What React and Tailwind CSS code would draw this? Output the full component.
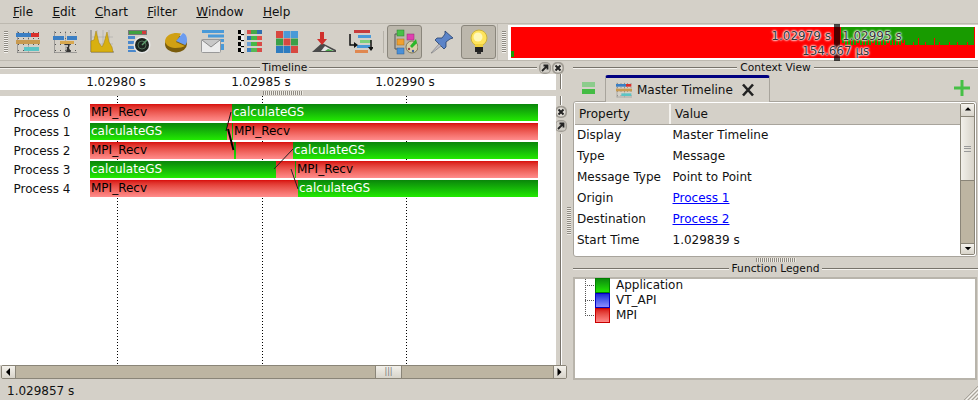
import React from 'react';

const GridDots = () => (
  <g fill="#555">
    {[2, 7, 12, 17, 22].map((x) =>
      [2, 8, 14, 20].map((y) => <rect key={`${x}-${y}`} x={x} y={y} width="1" height="1" />)
    )}
    <rect x="1" y="1" width="1" height="22" fill="#777" opacity="0.6" />
    <rect x="12" y="1" width="1" height="22" fill="#777" opacity="0.4" />
    <rect x="1" y="22" width="23" height="1" fill="#777" opacity="0.6" />
  </g>
);

const MasterIcon = ({ size = 24 }) => (
  <svg width={size} height={size} viewBox="0 0 24 24">
    <GridDots />
    <rect x="0" y="3" width="16" height="4" fill="#3b7fc4" />
    <rect x="15" y="3" width="8" height="4" fill="#d8302c" />
    <rect x="0" y="10" width="24" height="4" fill="#c89a50" />
    <rect x="8" y="17" width="15" height="4" fill="#5cc4c4" />
  </svg>
);

const CounterIcon = () => (
  <svg width="24" height="24" viewBox="0 0 24 24">
    <GridDots />
    <rect x="0" y="6" width="11" height="4" fill="#3b7fc4" />
    <rect x="14" y="6" width="10" height="4" fill="#3b7fc4" />
    <rect x="7" y="11" width="14" height="3" fill="#d8a850" />
    <path d="M11 14h6l-1 4 2 4h-5l1-4z" fill="#333" />
    <path d="M12 15h3v2h-3z" fill="#bbb" />
  </svg>
);

const ChartIcon = () => (
  <svg width="24" height="24" viewBox="0 0 24 24">
    <path d="M1 0v22h23" fill="none" stroke="#777" />
    <path d="M7 0v22M13 0v22M19 0v22M1 7h22M1 14h22" stroke="#aaa" strokeWidth="0.6" />
    <path d="M1 22V11l3-1 2-9 3 12 3 4 2-4 3-11 2 10 3 5 1 5z" fill="#d8b010" stroke="#a07c08" strokeWidth="0.5" />
  </svg>
);

const RadarIcon = () => (
  <svg width="24" height="24" viewBox="0 0 24 24">
    <rect x="1" y="0" width="19" height="5" fill="#777" />
    <rect x="2" y="1" width="17" height="3" fill="#3fa03f" />
    <rect x="15" y="1" width="4" height="3" fill="#d23c3c" />
    <rect x="1" y="6" width="7" height="3" fill="#4a88cc" />
    <rect x="1" y="11" width="6" height="3" fill="#4a88cc" />
    <rect x="1" y="16" width="6" height="3" fill="#4a88cc" />
    <rect x="1" y="20" width="8" height="2" fill="#4a88cc" />
    <circle cx="15" cy="15" r="8.5" fill="#e8e8e8" />
    <circle cx="15" cy="15" r="7" fill="#1c241e" />
    <circle cx="15" cy="15" r="4" fill="none" stroke="#4e6e56" />
    <path d="M15 15l5-5" stroke="#5fa06f" strokeWidth="1.5" />
  </svg>
);

const PieIcon = () => (
  <svg width="24" height="24" viewBox="0 0 24 24">
    <ellipse cx="12" cy="14" rx="11" ry="8.5" fill="#7a5c0c" />
    <path d="M12 12L17 3.5C12 2 2 3 1 11c0 3 4 7 10 7 5 0 8-1 10-2z" fill="#d0a014" />
    <path d="M12 11l7-8c3 1 4 4 4 7 0 2-1 5-2 5z" fill="#6c9cf0" />
  </svg>
);

const MessageIcon = () => (
  <svg width="24" height="24" viewBox="0 0 24 24">
    <rect x="1" y="0" width="22" height="3" fill="#4a9ad8" />
    <rect x="7" y="4.5" width="16" height="3" fill="#4a9ad8" />
    <rect x="15" y="9" width="8" height="3" fill="#4a9ad8" />
    <rect x="18" y="14" width="5" height="6" fill="#4a9ad8" />
    <rect x="0.5" y="9.5" width="19" height="13" rx="1" fill="#ececec" stroke="#999" />
    <path d="M1 10l9 7 9-7" fill="#c8c8c8" stroke="#8a8a8a" />
  </svg>
);

const ProcessIcon = () => {
  const bars = [
    ['#d8504c', '#46a846', '#2f6fb0'],
    ['#2f6fb0', '#46b846', '#e05048'],
    ['#6aa0d8', '#46b846', '#d84c48'],
    ['#3b7fc4', '#55b855', '#d84c48'],
  ];
  return (
    <svg width="24" height="24" viewBox="0 0 24 24">
      {bars.map((r, i) => (
        <g key={i} transform={`translate(0 ${i * 6})`}>
          <rect x="0" y="0" width="3" height="4" fill="#000" />
          <rect x="3" y="0" width="3" height="4" fill="#eee" />
          <rect x="3" y="4" width="3" height="1" fill="#000" />
          <rect x="9" y="0" width="5" height="4" fill={r[0]} />
          <rect x="13" y="0" width="6" height="4" fill={r[1]} />
          <rect x="19" y="0" width="5" height="4" fill={r[2]} />
        </g>
      ))}
    </svg>
  );
};

const MatrixIcon = () => {
  const cells = ['#d84840', '#4a9ad8', '#4a9ad8', '#3aa048', '#d84840', '#3aa048', '#2e7cc0', '#2e7cc0', '#d84840'];
  return (
    <svg width="24" height="24" viewBox="0 0 24 24">
      {cells.map((c, i) => (
        <rect key={i} x={1 + (i % 3) * 7.5} y={1 + Math.floor(i / 3) * 7.5} width="7" height="7" fill={c} />
      ))}
    </svg>
  );
};

const DiffIcon = () => (
  <svg width="24" height="24" viewBox="0 0 24 24">
    <path d="M0 22L10 13l14 7v2z" fill="#4a4a4a" />
    <path d="M13 16l9 5H9z" fill="#e4e4e4" />
    <path d="M16 19l6 2h-9z" fill="#4aa84a" />
    <path d="M8 2h4v7h3l-5 6-5-6h3z" fill="#d0302c" />
  </svg>
);

const CallIcon = () => (
  <svg width="24" height="24" viewBox="0 0 24 24">
    <rect x="5" y="0" width="16" height="3" fill="#c83c3c" />
    <rect x="9" y="5" width="13" height="3" fill="#4a9ad8" />
    <rect x="11" y="10" width="11" height="3" fill="#7cd07c" />
    <rect x="8" y="15" width="13" height="3" fill="#4a9ad8" />
    <rect x="6" y="20" width="13" height="3" fill="#e08850" />
    <path d="M1 4v11h6M22 10v9" fill="none" stroke="#111" strokeWidth="1.5" />
    <path d="M5 12l4 3-4 3zM19 17h6l-3 4z" fill="#111" />
  </svg>
);

const ModulesIcon = () => (
  <svg width="26" height="26" viewBox="0 0 26 26">
    <path d="M5 5H3v15h3" fill="none" stroke="#555" />
    <rect x="5" y="1" width="7" height="6" fill="#48c048" stroke="#2c7c2c" strokeWidth="0.5" />
    <rect x="5" y="10" width="7" height="6" fill="#f0a030" stroke="#a06c18" strokeWidth="0.5" />
    <rect x="5" y="19" width="7" height="6" fill="#4a90d8" stroke="#2c5c90" strokeWidth="0.5" />
    <rect x="15" y="5" width="7" height="6" fill="#e040b0" stroke="#902c70" strokeWidth="0.5" />
    <ellipse cx="20" cy="18" rx="6" ry="6" fill="#d8cfa8" stroke="#807858" />
    <path d="M24 10l-6 7 2 2 5-5z" fill="#28b828" />
    <circle cx="17" cy="20" r="1.2" fill="#a04040" />
    <circle cx="21" cy="22" r="1.2" fill="#4060a0" />
  </svg>
);

const PinIcon = () => (
  <svg width="24" height="24" viewBox="0 0 24 24">
    <path d="M15 1l8 7-3 1-4 3 0 5-2 2-9-9 2-2 5 0 3-4z" fill="#5c84c8" stroke="#24406c" strokeWidth="0.8" />
    <path d="M9 14L1 23l1 0 9-7z" fill="#c0c0c8" stroke="#666" strokeWidth="0.5" />
  </svg>
);

const BulbIcon = () => (
  <svg width="24" height="26" viewBox="0 0 24 26">
    <circle cx="12" cy="9" r="8" fill="#ffe45c" stroke="#c8b040" />
    <circle cx="11" cy="8" r="4.5" fill="#fff8b8" />
    <path d="M8 15h8v3H8z" fill="#f0d040" />
    <rect x="8" y="18" width="8" height="5" fill="#222" />
    <rect x="10" y="23" width="4" height="2" fill="#333" />
  </svg>
);

const StackIcon = () => (
  <svg width="15" height="13" viewBox="0 0 15 13">
    <rect x="1" y="0" width="13" height="5" fill="#8ccc8c" />
    <rect x="1" y="7" width="13" height="5" fill="#44bc44" />
  </svg>
);

const Grip = ({ className }) => (
  <div
    className={`bg-[repeating-linear-gradient(to_right,#8f8b83_0,#8f8b83_1px,#eeebe4_1px,#eeebe4_2px)] ${className}`}
  />
);

const GripV = () => (
  <div className="w-[4px] h-[28px] bg-[repeating-linear-gradient(to_bottom,#8f8b83_0,#8f8b83_1px,#eeebe4_1px,#eeebe4_2px)]" />
);

const Line = ({ className = 'flex-1' }) => (
  <div className={`h-[2px] border-t border-[#77736b] border-b-white bg-[#f4f2ee] ${className}`} />
);

const CloseBtn = () => (
  <div className="w-[12px] h-[12px] rounded-[5px] bg-[#a09c94] flex items-center justify-center">
    <svg width="10" height="10" viewBox="0 0 10 10">
      <circle cx="5" cy="5" r="4.5" fill="#e0ddd6" />
      <path d="M2.5 2.5l5 5M7.5 2.5l-5 5" stroke="#222" strokeWidth="2" />
    </svg>
  </div>
);

const FloatBtn = () => (
  <div className="w-[12px] h-[12px] rounded-[5px] bg-[#a09c94] flex items-center justify-center">
    <svg width="10" height="10" viewBox="0 0 10 10">
      <rect x="0.5" y="0.5" width="9" height="9" rx="2" fill="#d0cdc6" />
      <path d="M2 8l5-5M3.5 2.5h4v4" fill="none" stroke="#222" strokeWidth="1.8" />
    </svg>
  </div>
);

const Arrow = ({ dir }) => {
  const d = {
    up: 'M1 5.5h8L5 1.5z',
    down: 'M1 2.5h8L5 6.5z',
    left: 'M6 1v8L2 5z',
    right: 'M2.5 1v8L6.5 5z',
  }[dir];
  return (
    <svg width="10" height="10" viewBox="0 0 10 10" className={dir === 'up' || dir === 'down' ? 'h-[8px]' : ''}>
      <path d={d} fill="#000" />
    </svg>
  );
};

const ScrollBtn = ({ dir, className = '' }) => (
  <div className={`flex items-center justify-center bg-linear-to-b from-[#f4f2ec] to-[#d8d4ca] ${className}`}>
    <Arrow dir={dir} />
  </div>
);

const rows = [
  { name: 'Process 0', segs: [['r', 142, 'MPI_Recv'], ['g', 306, 'calculateGS']] },
  { name: 'Process 1', segs: [['g', 137, 'calculateGS'], ['r', 5], ['g', 1], ['r', 305, 'MPI_Recv']] },
  { name: 'Process 2', segs: [['r', 144, 'MPI_Recv'], ['g', 2], ['r', 57], ['g', 245, 'calculateGS']] },
  { name: 'Process 3', segs: [['g', 186, 'calculateGS'], ['r', 19], ['g', 1], ['r', 242, 'MPI_Recv']] },
  { name: 'Process 4', segs: [['r', 208, 'MPI_Recv'], ['g', 240, 'calculateGS']] },
];

const ticks = [117, 262, 406];

const details = [
  ['Display', 'Master Timeline'],
  ['Type', 'Message'],
  ['Message Type', 'Point to Point'],
  ['Origin', 'Process 1', true],
  ['Destination', 'Process 2', true],
  ['Start Time', '1.029839 s'],
];

const legend = [
  ['Application', 'border-[#008000] from-[#0c8c0c] to-[#22e600]'],
  ['VT_API', 'border-[#0000c0] from-[#2020d8] to-[#8c8cff]'],
  ['MPI', 'border-[#c80000] from-[#d81010] to-[#ff8888]'],
];

const halo = '[text-shadow:0_0_1px_#fff,0_0_2px_#fff,0_0_2px_#fff,0_0_3px_#fff] text-[#333]';

// comb of the red/green activity in the overview
const comb = Array.from({ length: 44 }, (_, i) => i * 3);

const App = () => {
  return (
    <div className="w-[978px] h-[400px] overflow-hidden flex flex-col bg-[#d4d0c8] text-[12px] leading-[14px] text-[#111] font-['DejaVu_Sans',sans-serif]">
      {/* Menu */}
      <div className="h-[23px] flex items-center gap-[19.3px] pl-[13px]">
        {['File', 'Edit', 'Chart', 'Filter', 'Window', 'Help'].map((m) => (
          <span key={m}>
            <span className="underline">{m[0]}</span>
            {m.slice(1)}
          </span>
        ))}
      </div>

      {/* Toolbar */}
      <div className="h-[38px] border-y border-y-[#bdb9b0] flex items-center pl-[4px]">
        <div className="w-[4px] h-[22px] mr-[1px] bg-[repeating-linear-gradient(to_bottom,#8f8b83_0,#8f8b83_1px,#f4f2ee_1px,#f4f2ee_2px)]" />
        {[MasterIcon, CounterIcon, ChartIcon, RadarIcon, PieIcon, MessageIcon, ProcessIcon, MatrixIcon, DiffIcon, CallIcon].map((Icon, i) => (
          <div key={i} className="w-[37px] flex justify-center">
            <Icon />
          </div>
        ))}
        <div className="w-px h-[22px] bg-[#b5b1a8] ml-[4px] mr-[3px]" />
        <div className="w-[35px] h-[34px] rounded-[3px] border border-[#8a867c] bg-[#bcb7ac] flex items-center justify-center">
          <ModulesIcon />
        </div>
        <div className="w-[39px] flex justify-center">
          <PinIcon />
        </div>
        <div className="w-[35px] h-[34px] rounded-[3px] border border-[#8a867c] bg-[#bcb7ac] flex items-center justify-center">
          <BulbIcon />
        </div>
        <div className="w-px h-[36px] bg-[#bdb9b0] ml-[1px]" />
        <div className="w-[4px] h-[22px] mx-[4px] bg-[repeating-linear-gradient(to_bottom,#8f8b83_0,#8f8b83_1px,#f4f2ee_1px,#f4f2ee_2px)]" />
        {/* Overview */}
        <div className="relative w-[470px] h-[35px] ml-[-2px] bg-white px-[3px] py-[2px]">
          <div className="relative w-full h-full bg-[#ff0000]">
            <svg width="463" height="30" className="absolute left-0 top-0">
              <rect x="0" y="24" width="3" height="6" fill="#189b00" />
              <rect x="330" y="0" width="133" height="13" fill="#189b00" />
              {comb.map((x) => (
                <rect key={x} x={331 + x} y="13" width="2" height={x % 5 === 0 ? 3 : 5} fill="#189b00" />
              ))}
              <rect x="394" y="13" width="69" height="5" fill="#189b00" />
              {[8, 13, 20, 29, 34, 44, 52, 62].map((x) => (
                <rect key={x} x={394 + x} y={x % 2 ? 11 : 15} width="1" height={x % 2 ? 7 : 3} fill="#ff0000" />
              ))}
            </svg>
            <div className="absolute left-[323px] top-[-3px] w-[6px] h-[37px] bg-black/70" />
            <span className={`absolute right-[144px] top-[2px] ${halo}`}>1.02979 s</span>
            <span className={`absolute left-[331px] top-[2px] ${halo}`}>1.02995 s</span>
            <span className={`absolute left-[291px] top-[17px] ${halo}`}>154.667 µs</span>
          </div>
        </div>
      </div>

      {/* Docks */}
      <div className="flex-1 min-h-0 flex">
        <div className="w-[567px] flex flex-col">
          <div className="relative h-[13px] flex items-center text-[10.67px]">
            <Line className="w-[260px]" />
            <span className="px-[2px]">Timeline</span>
            <Line className="flex-1 mr-[30px]" />
            <div className="absolute left-[539px] top-[1px] flex gap-[1px]">
              <FloatBtn />
              <CloseBtn />
            </div>
          </div>

          <div className="flex-1 min-h-0 flex">
            <div className="w-[556px] flex flex-col">
              <div className="relative h-[16px] bg-white">
                {ticks.map((t) => (
                  <span key={t} className="absolute top-[1px] w-[80px] text-center" style={{ left: t - 41 }}>
                    {(1.0298 + ((t - 117) / 145) * 0.00005).toFixed(5)} s
                  </span>
                ))}
              </div>
              <div className="h-[6px] flex justify-center items-center pl-[10px]">
                <Grip className="w-[40px] h-[4px]" />
              </div>

              <div className="relative flex-1 min-h-0 bg-white pt-[8px]">
                {ticks.map((t) => (
                  <div
                    key={t}
                    className="absolute top-0 bottom-0 w-px bg-[repeating-linear-gradient(to_bottom,#000_0,#000_1px,transparent_1px,transparent_3px)]"
                    style={{ left: t }}
                  />
                ))}
                <div className="relative flex flex-col gap-[2px]">
                  {rows.map((r) => (
                    <div key={r.name} className="h-[17px] flex items-center">
                      <div className="w-[90px] pl-[13.5px]">{r.name}</div>
                      <div className="flex h-full">
                        {r.segs.map(([kind, w, label], i) => (
                          <div
                            key={i}
                            className={`h-full overflow-hidden pl-[1px] whitespace-nowrap leading-[17px] bg-linear-to-b ${
                              kind === 'r'
                                ? 'from-[#d80808] to-[#ff8c8c] text-black'
                                : 'from-[#0a860a] to-[#22ea00] text-white'
                            }`}
                            style={{ width: w }}
                          >
                            {label}
                          </div>
                        ))}
                      </div>
                    </div>
                  ))}
                </div>
                <svg width="556" height="120" className="absolute left-0 top-0">
                  <path d="M231 16L226 35" stroke="#111" strokeWidth="1" />
                  <path d="M228 33L233.5 54" stroke="#000" strokeWidth="2" />
                  <path d="M293 53L274 73" stroke="#222" strokeWidth="1" />
                  <path d="M291 73L298 93" stroke="#222" strokeWidth="1" />
                </svg>
              </div>
            </div>

            {/* vertical title of the timeline dock */}
            <div className="w-[11px] flex flex-col items-center -ml-[1px] mr-[1px]">
              <div className="h-[15px] w-[2px] bg-[#77736b] border-r border-white" />
              <div className="h-[7px]" />
              <div className="h-[9px] w-[2px] bg-[#77736b] border-r border-white" />
              <div className="mt-[1px] flex flex-col gap-[2px] items-center">
                <CloseBtn />
                <FloatBtn />
              </div>
              <div className="flex-1 mt-[2px] w-[2px] bg-[#77736b] border-r border-white" />
            </div>
          </div>

          <div className="h-[14px] mb-[1px] ml-[1px] rounded-[2px] border border-[#8a8578] flex bg-[#bdb5a2]">
            <ScrollBtn dir="left" className="w-[14px] border-r border-[#8a8578]" />
            <div className="w-[359px]" />
            <div className="w-[27px] border-x border-[#8a8578] bg-linear-to-b from-[#f2f0ea] to-[#d8d4ca] flex items-center justify-center text-[8px] text-[#777]">
              |||
            </div>
            <div className="flex-1" />
            <ScrollBtn dir="right" className="w-[13px] border-l border-[#8a8578]" />
          </div>
        </div>

        <div className="w-[6px] flex items-center">
          <GripV />
        </div>

        {/* Context view */}
        <div className="w-[405px] flex flex-col">
          <div className="h-[13px] flex items-center text-[10.67px]">
            <Line />
            <span className="px-[3px]">Context View</span>
            <Line />
          </div>

          <div className="h-[27px] flex items-end relative">
            <div className="w-[32px] self-center pl-[8px] pt-[2px]">
              <StackIcon />
            </div>
            <div className="h-[27px] w-[165px] rounded-t-[3px] border-t-[3px] border-t-[#000080] border-x border-[#a8a49c] bg-[#d4d0c8] flex items-center pl-[10px] -mb-px relative">
              <MasterIcon size={16} />
              <span className="ml-[5px]">Master Timeline</span>
              <svg width="14" height="14" viewBox="0 0 14 14" className="ml-[8px]">
                <path d="M2 1.5l10 11M12 1.5L2 12.5" stroke="#222" strokeWidth="2.6" />
              </svg>
            </div>
            <svg width="16" height="16" viewBox="0 0 16 16" className="absolute left-[381px] top-[6px]">
              <path d="M6.5 0h3v6.5H16v3H9.500v6.500h-3V9.500H0v-3h6.500z" fill="#46c046" />
            </svg>
          </div>

          <div className="h-[156px] mr-[1px] rounded-[3px] border border-[#a8a49c] flex bg-white overflow-hidden p-[1px]">
            <div className="flex-1 flex flex-col">
              <div className="h-[22px] bg-[#d4d0c8] border-b border-[#a8a49c] flex items-center relative">
                <span className="pl-[4px] w-[95px]">Property</span>
                <span className="w-[2px] h-[20px] bg-[#f4f2ee] -ml-[1px] mr-[4px]" />
                <span>Value</span>
              </div>
              <div className="flex flex-col -mt-[1px]">
                {details.map(([k, v, link]) => (
                  <div key={k} className="h-[21px] flex items-center">
                    <span className="w-[97.5px] pl-[2px]">{k}</span>
                    {link ? <span className="text-[#0000ff] underline">{v}</span> : <span>{v}</span>}
                  </div>
                ))}
              </div>
            </div>
            <div className="w-[15px] flex flex-col border border-[#8a8578] rounded-[2px] bg-[#bdb5a2]">
              <ScrollBtn dir="up" className="h-[13px] border-b border-[#8a8578]" />
              <div className="h-[64px] border-b border-[#8a8578] bg-linear-to-r from-[#f2f0ea] to-[#d8d4ca] flex items-center justify-center">
                <div className="w-[7px] h-[6px] border-y border-[#999] bg-[linear-gradient(#999,#999)] bg-center bg-no-repeat bg-[length:100%_1px]" />
              </div>
              <div className="flex-1" />
              <ScrollBtn dir="down" className="h-[11px] border-t border-[#8a8578]" />
            </div>
          </div>

          <div className="h-[6px] flex justify-center items-center">
            <Grip className="w-[40px] h-[4px]" />
          </div>

          <div className="h-[14px] pb-[2px] flex items-center text-[10.67px]">
            <Line />
            <span className="px-[3px]">Function Legend</span>
            <Line />
          </div>

          <div className="h-[103px] mr-[1px] relative border-2 border-[#b8b4ab] bg-white">
            <div className="absolute left-[10px] top-[0px] h-[38px] w-px bg-[repeating-linear-gradient(to_bottom,#555_0,#555_1px,transparent_1px,transparent_2px)]" />
            <div className="-mt-px">
              {legend.map(([name, cls]) => (
                <div key={name} className="h-[15px] flex items-center">
                  <div className="w-[10px] ml-[10px] h-px bg-[repeating-linear-gradient(to_right,#555_0,#555_1px,transparent_1px,transparent_2px)]" />
                  <div className={`w-[15px] h-[15px] border bg-linear-to-b ${cls}`} />
                  <span className="ml-[6px] -mt-[1px]">{name}</span>
                </div>
              ))}
            </div>
          </div>
        </div>
      </div>

      {/* Status bar */}
      <div className="h-[20px] relative flex items-center pl-[7px] pt-[1px]">
        1.029857 s
        <svg width="16" height="16" viewBox="0 0 16 16" className="absolute right-0 bottom-0">
          <path d="M16 2L2 16M16 6L6 16M16 10L10 16M16 14L14 16" stroke="#a8a49c" />
          <path d="M16 4L4 16M16 8L8 16M16 12L12 16" stroke="#f4f2ee" />
        </svg>
      </div>
    </div>
  );
};

export default App;
